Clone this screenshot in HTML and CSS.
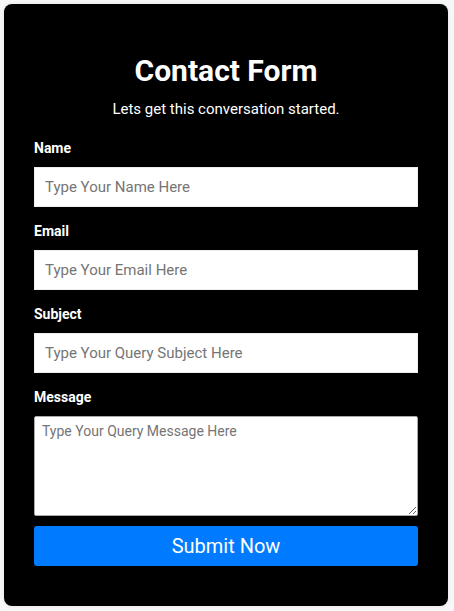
FILE: index.html
```html
<!DOCTYPE html>
<html>
<head>
<meta charset="utf-8">
<link rel="stylesheet" href="styles.css">
</head>
<body>
<form class="card">
  <h1 class="title">Contact Form</h1>
  <p class="subtitle">Lets get this conversation started.</p>
  <label class="label" for="name">Name</label>
  <input class="field" id="name" type="text" placeholder="Type Your Name Here">
  <label class="label" for="email">Email</label>
  <input class="field" id="email" type="text" placeholder="Type Your Email Here">
  <label class="label" for="subject">Subject</label>
  <input class="field" id="subject" type="text" placeholder="Type Your Query Subject Here">
  <label class="label" for="message">Message</label>
  <textarea class="area" id="message" placeholder="Type Your Query Message Here"></textarea>
  <button class="submit" type="button">Submit Now</button>
</form>
</body>
</html>
```
FILE: styles.css
```css
html, body {
  margin: 0;
  padding: 0;
  background: #f7f7f7;
}
body {
  padding: 4px;
  font-family: Roboto, "Liberation Sans", sans-serif;
}
.card {
  width: 444px;
  box-sizing: border-box;
  background: #000;
  border-radius: 8px;
  padding: 50px 30px 40px;
  display: flex;
  flex-direction: column;
  box-shadow: 0 0 4px rgba(0,0,0,0.08);
}
.title {
  margin: 0;
  font-size: 30px;
  line-height: 33px;
  font-weight: 700;
  color: #fff;
  text-align: center;
}
.subtitle {
  margin: 13px 0 22px;
  font-size: 15px;
  line-height: 18px;
  color: #fff;
  text-align: center;
}
.label {
  display: block;
  font-size: 14px;
  line-height: 16px;
  font-weight: 700;
  color: #fff;
  margin-bottom: 11px;
}
.field {
  display: block;
  height: 40px;
  box-sizing: border-box;
  width: 100%;
  border: 1px solid #eee;
  padding: 0 10px;
  margin: 0 0 16px;
  font-family: Roboto, "Liberation Sans", sans-serif;
  font-size: 15px;
  background: #fff;
  outline: none;
}
.field::placeholder, .area::placeholder {
  color: #757575;
}
.area {
  display: block;
  height: 100px;
  box-sizing: border-box;
  width: 100%;
  border: 1px solid #a9a9a9;
  border-radius: 2px;
  padding: 6px 7px;
  margin: 0;
  font-family: Roboto, "Liberation Sans", sans-serif;
  font-size: 14px;
  background: #fff;
}
.submit {
  margin-top: 10px;
  height: 40px;
  border: none;
  border-radius: 3px;
  background: #007bff;
  color: #fff;
  font-family: Roboto, "Liberation Sans", sans-serif;
  font-size: 20px;
  padding: 0;
}
```
